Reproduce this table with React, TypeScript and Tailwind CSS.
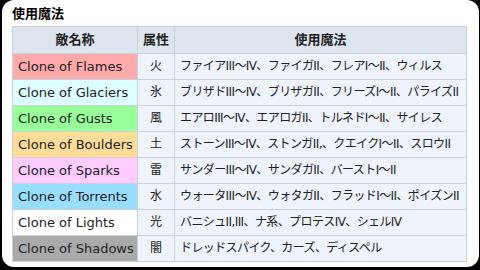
import React from 'react';

interface Row {
  name: string;
  color: string;
  element: string;
  spells: string;
}

const ROWS: Row[] = [
  { name: 'Clone of Flames', color: 'bg-[#ffaaaa]', element: '火', spells: 'ファイアIII～IV、ファイガII、フレアI～II、ウィルス' },
  { name: 'Clone of Glaciers', color: 'bg-[#ddffff]', element: '氷', spells: 'ブリザドIII～IV、ブリザガII、フリーズI～II、パライズII' },
  { name: 'Clone of Gusts', color: 'bg-[#99ff99]', element: '風', spells: 'エアロIII～IV、エアロガII、トルネドI～II、サイレス' },
  { name: 'Clone of Boulders', color: 'bg-[#ffdd99]', element: '土', spells: 'ストーンIII～IV、ストンガII,、クエイクI～II、スロウII' },
  { name: 'Clone of Sparks', color: 'bg-[#ffccff]', element: '雷', spells: 'サンダーIII～IV、サンダガII、バーストI～II' },
  { name: 'Clone of Torrents', color: 'bg-[#99ddff]', element: '水', spells: 'ウォータIII～IV、ウォタガII、フラッドI～II、ポイズンII' },
  { name: 'Clone of Lights', color: 'bg-white', element: '光', spells: 'バニシュII,III、ナ系、プロテスIV、シェルIV' },
  { name: 'Clone of Shadows', color: 'bg-[#aaaaaa]', element: '闇', spells: 'ドレッドスパイク、カーズ、ディスペル' },
];

const cell = 'border border-[#c9d1dd] p-0 leading-[25px]';

const App: React.FC = () => {
  return (
    <div className="w-[480px] h-[270px] bg-black overflow-hidden">
      <div className="ml-[2px] w-[477px] h-[267px] bg-white rounded-[12px] px-[10px] pt-[6px] [font-family:'DejaVu_Sans','Noto_Sans_CJK_JP',sans-serif]">
        <h2 className="text-[13px] leading-[15px] font-bold text-black mb-[5px]">使用魔法</h2>
        <table className="w-[455px] table-fixed border-collapse text-[13px] text-[#222]">
          <colgroup>
            <col className="w-[125px]" />
            <col className="w-[37px]" />
            <col />
          </colgroup>
          <thead>
            {/* header row */}
            <tr className="bg-[#dee5ef]">
              <th className={`${cell} leading-[26px] font-bold text-center`}>敵名称</th>
              <th className={`${cell} leading-[26px] font-bold text-center`}>属性</th>
              <th className={`${cell} leading-[26px] font-bold text-center`}>使用魔法</th>
            </tr>
          </thead>
          <tbody>
            {ROWS.map(r => (
              <tr key={r.name} className="bg-[#eef3fc]">
                <td className={`${cell} ${r.color} px-[5px] whitespace-nowrap`}>{r.name}</td>
                <td className={`${cell} text-center text-[12px]`}>{r.element}</td>
                <td className={`${cell} px-[5px] text-[12px] whitespace-nowrap overflow-hidden tracking-[-0.6px]`}>{r.spells}</td>
              </tr>
            ))}
          </tbody>
        </table>
      </div>
    </div>
  );
};

export default App;
